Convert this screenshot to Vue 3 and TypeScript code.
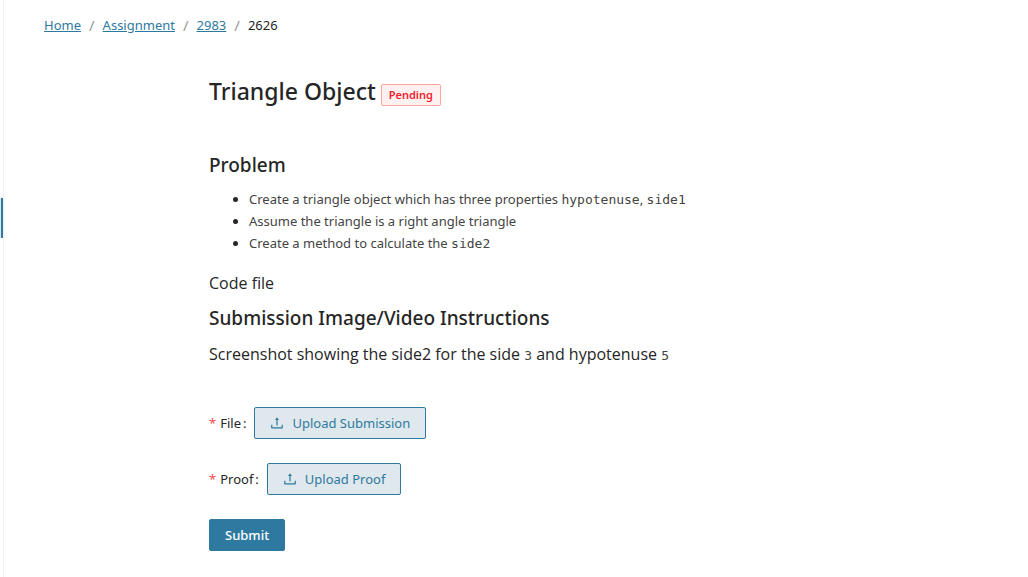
<script setup lang="ts">
interface Crumb {
  label: string
  href: string
}

interface UploadField {
  id: string
  label: string
  action: string
}

const crumbs: Crumb[] = [
  { label: 'Home', href: '#/' },
  { label: 'Assignment', href: '#/assignment' },
  { label: '2983', href: '#/assignment/2983' },
]

const fields: UploadField[] = [
  { id: 'file', label: 'File', action: 'Upload Submission' },
  { id: 'proof', label: 'Proof', action: 'Upload Proof' },
]
</script>

<template>
  <div class="page">
    <aside class="rail"><span class="rail-marker"></span></aside>
    <div class="content">
      <nav class="crumbs" aria-label="Breadcrumb">
        <template v-for="crumb in crumbs" :key="crumb.href">
          <a :href="crumb.href">{{ crumb.label }}</a>
          <span class="slash">/</span>
        </template>
        <span class="current">2626</span>
      </nav>

      <main class="assignment">
        <header class="heading">
          <h1>Triangle Object</h1>
          <span class="tag">Pending</span>
        </header>

        <h2>Problem</h2>
        <ul>
          <li>Create a triangle object which has three properties <code>hypotenuse</code>, <code>side1</code></li>
          <li>Assume the triangle is a right angle triangle</li>
          <li>Create a method to calculate the <code>side2</code></li>
        </ul>
        <h3 class="code-title">Code file</h3>
        <h2>Submission Image/Video Instructions</h2>
        <h3>Screenshot showing the side2 for the side <code>3</code> and hypotenuse <code>5</code></h3>

        <form @submit.prevent>
          <div v-for="field in fields" :key="field.id" class="field">
            <label :for="field.id"><span class="star">*</span>{{ field.label }}<span class="colon">:</span></label>
            <button :id="field.id" type="button" class="upload">
              <svg viewBox="64 64 896 896" width="14" height="14" fill="currentColor" aria-hidden="true">
                <path d="M400 317.700h73.900V656c0 4.400 3.600 8 8 8h60c4.400 0 8-3.600 8-8V317.700H624c6.700 0 10.400-7.700 6.300-12.900L518.300 163a8 8 0 0 0-12.600 0l-112 141.700c-4.100 5.300-.4 13 6.300 13zM878 626h-60c-4.400 0-8 3.600-8 8v154H214V634c0-4.400-3.600-8-8-8h-60c-4.400 0-8 3.600-8 8v198c0 17.700 14.300 32 32 32h684c17.700 0 32-14.300 32-32V634c0-4.400-3.600-8-8-8z" />
              </svg>
              <span>{{ field.action }}</span>
            </button>
          </div>
          <button type="submit" class="submit">Submit</button>
        </form>
      </main>
    </div>
  </div>
</template>

<style>
body {
  background: #fff;
}
</style>

<style scoped>
.page {
  display: flex;
  min-height: 100vh;
  font-family: "Noto Sans", "Open Sans", sans-serif;
  font-size: 13px;
  line-height: 22px;
  color: #262626;
}
.rail {
  box-sizing: border-box;
  flex: none;
  width: 4px;
  padding-top: 198px;
  border-right: 1px solid #f0f0f0;
}
.rail-marker {
  display: block;
  height: 40px;
  background: #2e79a0;
  border-left: 1px solid #dfe8ec;
}
.content {
  flex: 1;
  min-width: 0;
  padding: 14px 40px 24px;
}
.crumbs {
  display: flex;
  gap: 8px;
}
.crumbs a {
  color: #2e79a0;
  text-decoration: underline;
}
.slash {
  color: #999;
  font-size: 15px;
}
.assignment {
  margin: 39px 125px 0 165px;
}
.heading {
  display: flex;
  align-items: center;
  gap: 5px;
  margin-bottom: 44px;
}
h1,
h2,
h3 {
  margin: 0;
  font-weight: 500;
}
h1 {
  font-size: 23px;
  line-height: 32px;
}
h2 {
  margin-bottom: 8px;
  font-size: 19px;
  line-height: 28px;
}
h3 {
  font-family: "Open Sans", "Noto Sans", sans-serif;
  font-size: 16px;
  line-height: 28px;
}
.tag {
  margin-top: 8px;
  padding: 0 7px;
  border: 1px solid #ffa39e;
  border-radius: 2px;
  background: #fff1f0;
  color: #f5222d;
  font-size: 11px;
  font-weight: 600;
  line-height: 20px;
}
ul {
  margin: 9px 0 15px;
  padding-left: 40px;
}
li {
  color: #444;
}
li::marker {
  color: #262626;
}
code {
  color: #444;
  font-family: "DejaVu Sans Mono", monospace;
  font-size: 13px;
  font-weight: 400;
  line-height: 1;
}
.code-title {
  margin-bottom: 7px;
}
form {
  margin-top: 39px;
}
.field {
  display: flex;
  align-items: center;
  gap: 8px;
  margin-bottom: 24px;
}
.star {
  margin-right: 4px;
  color: #ff4d4f;
}
.colon {
  margin-left: 2px;
}
button {
  height: 32px;
  padding: 0 15px;
  border: 1px solid #2e79a0;
  border-radius: 2px;
  font: inherit;
  cursor: pointer;
}
.upload {
  display: flex;
  align-items: center;
  gap: 8px;
  background: #dfe8ec;
  color: #2e79a0;
}
.submit {
  background: #2e79a0;
  color: #fff;
  font-weight: 500;
}
</style>
